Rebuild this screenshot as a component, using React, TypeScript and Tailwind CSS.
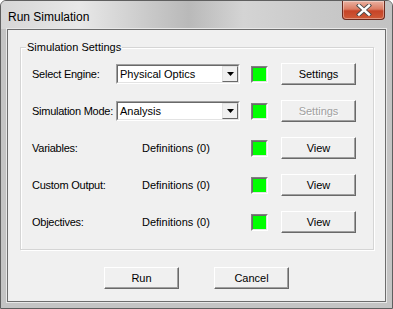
const font = { fontFamily: '"Liberation Sans", Arial, sans-serif' }

function Btn({ label, disabled }: { label: string; disabled?: boolean }) {
  return (
    <div className="w-[75px] h-[22px] bg-[#f0f0f0] border-t border-l border-t-white border-l-white border-r border-b border-r-[#696969] border-b-[#696969] shadow-[inset_-1px_-1px_0_#a0a0a0] flex items-center justify-center text-[11px] leading-none">
      <span className={disabled ? 'text-[#a0a0a0] [text-shadow:1px_1px_0_#fff]' : 'text-black'}>{label}</span>
    </div>
  )
}

function Lamp() {
  return (
    <div className="w-[17px] h-[17px] border border-t-[#808080] border-l-[#808080] border-r-white border-b-white">
      <div className="w-full h-full bg-[#00ff00] border border-t-[#696969] border-l-[#696969] border-r-[#e3e3e3] border-b-[#e3e3e3]" />
    </div>
  )
}

function Combo({ value }: { value: string }) {
  return (
    <div className="w-[124px] h-[20px] border border-t-[#a0a0a0] border-l-[#a0a0a0] border-r-white border-b-white">
      <div className="w-full h-full bg-white border border-t-[#696969] border-l-[#696969] border-r-[#e3e3e3] border-b-[#e3e3e3] flex items-center">
        <span className="flex-1 pl-[2px] text-[11px] text-black leading-none">{value}</span>
        <div className="w-[16px] h-full bg-[#f0f0f0] border border-t-[#e3e3e3] border-l-[#e3e3e3] border-r-[#696969] border-b-[#696969] flex items-center justify-center">
          <svg width="7" height="4" viewBox="0 0 7 4">
            <path d="M0 0h7L3.5 4z" fill="#000" />
          </svg>
        </div>
      </div>
    </div>
  )
}

function Row({ label, children, button, disabled }: { label: string; children: React.ReactNode; button: string; disabled?: boolean }) {
  return (
    <div className="flex items-center h-[22px]">
      <div className="w-[84px] text-[11px] text-black whitespace-nowrap tracking-[-0.25px]">{label}</div>
      <div className="w-[135px] flex items-center">{children}</div>
      <Lamp />
      <div className="w-[13px]" />
      <Btn label={button} disabled={disabled} />
    </div>
  )
}

function DefRow({ label }: { label: string }) {
  return (
    <Row label={label} button="View">
      <span className="pl-[26px] text-[11px] text-black whitespace-nowrap">Definitions (0)</span>
    </Row>
  )
}

export default function App() {
  return (
    <div style={font} className="w-[393px] h-[309px] bg-[#c4c4c4] border border-[#5f5f5f] rounded-t-[6px] flex flex-col overflow-hidden">
      <div className="h-[28px] flex justify-between bg-[linear-gradient(90deg,#d6d6d6_0%,#e8e8e8_20%,#c9c9c9_38%,#b9b9b9_48%,#d4d4d4_62%,#cacaca_80%,#c2c2c2_100%)]">
        <span className="self-center pl-[7px] pt-[3px] text-[12px] text-black">Run Simulation</span>
        <div className="mr-[7px] w-[43px] h-[19px] rounded-b-[4px] border border-t-0 border-[#6b2a1e] bg-[linear-gradient(180deg,#eab1a1_0%,#dc7c63_45%,#c64427_55%,#cf5a37_100%)] shadow-[inset_0_0_0_1px_rgba(255,255,255,0.35)] flex items-center justify-center">
          <svg width="16" height="12" viewBox="0 0 16 12">
            <path d="M3 1.5L13 10.5M13 1.5L3 10.5" stroke="#4a4a4a" strokeWidth="4.2" strokeLinecap="square" />
            <path d="M3 1.5L13 10.5M13 1.5L3 10.5" stroke="#fff" strokeWidth="2.4" strokeLinecap="square" />
          </svg>
        </div>
      </div>
      <div className="mx-[6px] mb-[6px] flex-1 bg-[#f0f0f0] border border-[#6d6d6d] shadow-[0_0_0_1px_#e8e8e8] flex flex-col">
        <div className="relative mt-[17px] ml-[12px] w-[354px] h-[203px] border border-[#d5d5d5] shadow-[inset_1px_1px_0_#fff,1px_1px_0_#fff]">
          <span className="absolute -top-[8px] left-[5px] px-[1px] bg-[#f0f0f0] text-[11px] text-black leading-[14px]">Simulation Settings</span>
          <div className="pt-[15px] pl-[11px] flex flex-col gap-[15px]">
            <Row label="Select Engine:" button="Settings">
              <Combo value="Physical Optics" />
            </Row>
            <Row label="Simulation Mode:" button="Settings" disabled>
              <Combo value="Analysis" />
            </Row>
            <DefRow label="Variables:" />
            <DefRow label="Custom Output:" />
            <DefRow label="Objectives:" />
          </div>
        </div>
        <div className="mt-[17px] flex justify-center gap-[35px]">
          <Btn label="Run" />
          <Btn label="Cancel" />
        </div>
      </div>
    </div>
  )
}
